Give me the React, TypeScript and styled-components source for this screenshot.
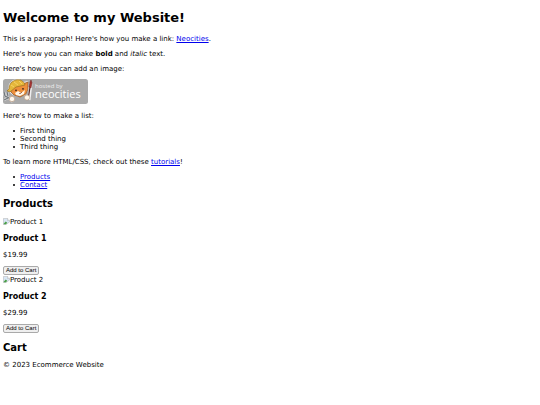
import React from 'react';
import styled, { createGlobalStyle } from 'styled-components';

const GlobalStyle = createGlobalStyle`
  body {
    margin: 0;
    background: #fff;
    color: #000;
    font: 7px/8px "DejaVu Sans", Verdana, sans-serif;
  }
`;

const Page = styled.div`
  padding: 10px 3px;
`;

const Title = styled.h1`
  margin: 0 0 9px;
  font-size: 13px;
  line-height: 16px;
`;

const Heading = styled.h2`
  margin: 9px 0 7px;
  font-size: 10px;
  line-height: 12px;
`;

const ProductName = styled.h3`
  margin: 8px 0;
  font-size: 8px;
  line-height: 9px;
`;

const Paragraph = styled.p<{ $tight?: boolean }>`
  margin: 7px 0 ${({ $tight }) => ($tight ? '6px' : '7px')};
`;

const List = styled.ul`
  margin: 7px 0;
  padding: 0 0 0 10px;
  list-style: none;
`;

const ListItem = styled.li`
  display: flex;
  align-items: center;

  &::before {
    content: "";
    width: 2px;
    height: 2px;
    margin-right: 5px;
    border-radius: 50%;
    background: #000;
  }
`;

const Link = styled.a`
  color: #0000ee;
  text-decoration: underline;
`;

const BadgeLink = styled.a`
  display: block;
  width: 85px;
  height: 25px;
  margin: 6px 0 8px;
`;

const Badge = styled.svg`
  display: block;
  width: 100%;
  height: 100%;
  font-family: "Open Sans", "Noto Sans", sans-serif;
`;

const ProductImage = styled.div`
  display: flex;
  align-items: center;
  height: 9px;
`;

const MissingIcon = styled.svg`
  width: 7px;
  height: 7px;
`;

const CartButton = styled.button`
  display: block;
  box-sizing: border-box;
  height: 9px;
  padding: 0 2px;
  border: 1px solid #aaa;
  border-radius: 2px;
  background: #efefef;
  color: #000;
  font: 6px/7px "Liberation Sans", Arial, sans-serif;
`;

const HostBadge = () => (
  <Badge viewBox="0 0 85 25" role="img" aria-label="Hosted by Neocities">
    <rect width="85" height="25" rx="2.5" fill="#aaa" />
    <path d="m5 11 1-6 4-4 6-1 4 3 5-1 1 7-3 7-7 2-6-2-4-3Z" fill="#eee" />
    <path d="m7 11 5-4 8-2 5-2v7l-2 5-6 3-6-2-3-3Z" fill="#ed8f3b" stroke="#874d22" strokeWidth=".7" />
    <path d="M6 10C6 5 9 2 13 1c4-1 8 1 9 5l-9 2-6 5-3-1Z" fill="#e5b73a" stroke="#997022" strokeWidth=".7" />
    <path d="m8 6 3 2m0-5 4 3m1-4 3 3" stroke="#f9db78" strokeWidth=".7" />
    <path d="m12 14 3-2 3 2 4-3-1 4-4 2-4-1Z" fill="#fff6e8" />
    <circle cx="13" cy="11.3" r=".9" fill="#3b241c" />
    <circle cx="20" cy="9.8" r=".9" fill="#3b241c" />
    <path d="m16 14 1 1 2-2" fill="none" stroke="#753d2c" strokeWidth=".6" />
    <path d="m1 13 1 4 4 2 4 4M4 13l1 4M1 21l4-2" fill="none" stroke="#ddd" strokeWidth="2.5" />
    <path d="m1 13 1 4 4 2 4 4M4 13l1 4M1 21l4-2" fill="none" stroke="#70767b" strokeWidth="1.2" />
    <circle cx="9" cy="20" r="2.7" fill="#fff8ed" stroke="#b9977d" strokeWidth=".6" />
    <path d="m28 4-2 17" stroke="#eee" strokeWidth="3" />
    <path d="m27 8-2 13" stroke="#5c2925" strokeWidth="1.2" />
    <path d="m26 8 1-5 1-2 1 3-1 5Z" fill="#a83332" stroke="#6a2825" strokeWidth=".5" />
    <circle cx="24" cy="18.5" r="2.6" fill="#fff8ed" stroke="#b9977d" strokeWidth=".6" />
    <text x="32" y="9" fontSize="6" fill="#eee">hosted by</text>
    <text x="32" y="19" fontSize="11" fill="#fff">neocities</text>
  </Badge>
);

const BrokenPicture = () => (
  <MissingIcon viewBox="0 0 7 7" aria-hidden="true">
    <path d="M.4.4h4.2l2 2v1.5L3 6.5H.4Z" fill="#d8e6f5" stroke="#aaa" strokeWidth=".5" />
    <path d="m.7 5.8 2-2.3 1.5 1.2L3 6.2H.7Z" fill="#4a9f45" />
    <path d="M4.5.5v2h2" fill="#fff" stroke="#aaa" strokeWidth=".5" />
  </MissingIcon>
);

const products = [
  { name: 'Product 1', price: '$19.99' },
  { name: 'Product 2', price: '$29.99' },
];

export default function App() {
  return (
    <Page>
      <GlobalStyle />
      <Title>Welcome to my Website!</Title>
      <Paragraph>
        This is a paragraph! Here's how you make a link: <Link href="#neocities">Neocities</Link>.
      </Paragraph>
      <Paragraph>
        Here's how you can make <strong>bold</strong> and <em>italic</em> text.
      </Paragraph>
      <Paragraph $tight>Here's how you can add an image:</Paragraph>
      <BadgeLink href="#neocities"><HostBadge /></BadgeLink>
      <Paragraph>Here's how to make a list:</Paragraph>
      <List>
        <ListItem>First thing</ListItem>
        <ListItem>Second thing</ListItem>
        <ListItem>Third thing</ListItem>
      </List>
      <Paragraph>
        To learn more HTML/CSS, check out these <Link href="#tutorials">tutorials</Link>!
      </Paragraph>
      <nav>
        <List>
          <ListItem><Link href="#products">Products</Link></ListItem>
          <ListItem><Link href="#cart">Contact</Link></ListItem>
        </List>
      </nav>
      <section id="products">
        <Heading>Products</Heading>
        {products.map(({ name, price }) => (
          <article key={name}>
            <ProductImage><BrokenPicture />{name}</ProductImage>
            <ProductName>{name}</ProductName>
            <Paragraph>{price}</Paragraph>
            <CartButton type="button">Add to Cart</CartButton>
          </article>
        ))}
      </section>
      <section id="cart">
        <Heading>Cart</Heading>
      </section>
      <footer>
        <Paragraph>© 2023 Ecommerce Website</Paragraph>
      </footer>
    </Page>
  );
}
